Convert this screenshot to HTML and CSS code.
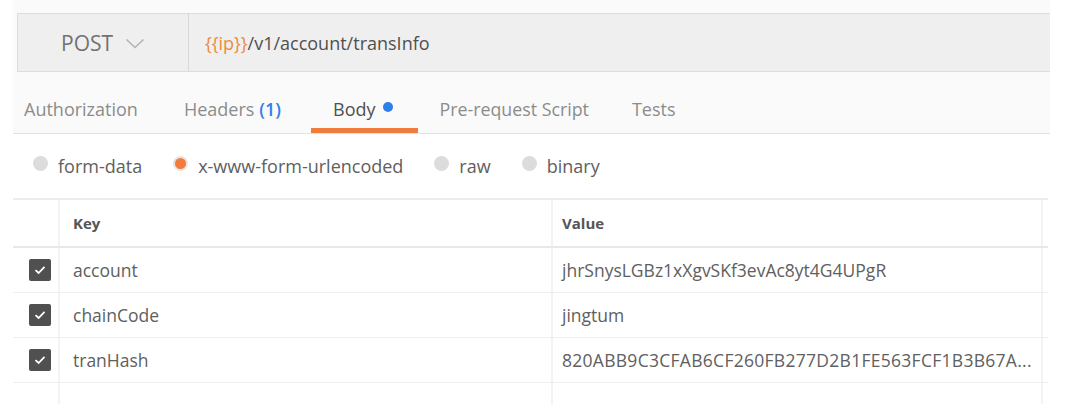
FILE: index.html
```html
<!DOCTYPE html>
<html>
<head>
<meta charset="utf-8">
<link rel="stylesheet" href="styles.css">
</head>
<body>
<div class="panel">
  <div class="top">
    <div class="urlbar">
      <div class="method">
        <span class="method-name">POST</span>
        <svg class="chev" width="20" height="11" viewBox="0 0 20 11"><path d="M1.5 1.5 L10 9.5 L18.5 1.5" fill="none" stroke="#b3b3b3" stroke-width="1.6"/></svg>
      </div>
      <div class="url"><span class="var">{{ip}}</span>/v1/account/transInfo</div>
    </div>
    <div class="tabs">
      <div class="tab">Authorization</div>
      <div class="tab">Headers <span class="count">(1)</span></div>
      <div class="tab active">Body <span class="dot"></span></div>
      <div class="tab">Pre-request Script</div>
      <div class="tab">Tests</div>
    </div>
  </div>
  <div class="radios">
    <label class="radio"><span class="circle"></span>form-data</label>
    <label class="radio"><span class="circle on"></span>x-www-form-urlencoded</label>
    <label class="radio"><span class="circle"></span>raw</label>
    <label class="radio"><span class="circle"></span>binary</label>
  </div>
  <div class="table">
    <div class="row head">
      <div class="c-check"></div>
      <div class="c-key">Key</div>
      <div class="c-val">Value</div>
    </div>
    <div class="row">
      <div class="c-check"><span class="cb"><svg width="12" height="10" viewBox="0 0 12 10"><path d="M1.5 5.2 L4.6 8 L10.5 1.8" fill="none" stroke="#fff" stroke-width="1.8"/></svg></span></div>
      <div class="c-key">account</div>
      <div class="c-val">jhrSnysLGBz1xXgvSKf3evAc8yt4G4UPgR</div>
    </div>
    <div class="row">
      <div class="c-check"><span class="cb"><svg width="12" height="10" viewBox="0 0 12 10"><path d="M1.5 5.2 L4.6 8 L10.5 1.8" fill="none" stroke="#fff" stroke-width="1.8"/></svg></span></div>
      <div class="c-key">chainCode</div>
      <div class="c-val">jingtum</div>
    </div>
    <div class="row">
      <div class="c-check"><span class="cb"><svg width="12" height="10" viewBox="0 0 12 10"><path d="M1.5 5.2 L4.6 8 L10.5 1.8" fill="none" stroke="#fff" stroke-width="1.8"/></svg></span></div>
      <div class="c-key">tranHash</div>
      <div class="c-val hash">820ABB9C3CFAB6CF260FB277D2B1FE563FCF1B3B67A...</div>
    </div>
    <div class="row last">
      <div class="c-check"></div>
      <div class="c-key"></div>
      <div class="c-val"></div>
    </div>
  </div>
</div>
</body>
</html>
```
FILE: styles.css
```css
html, body {
  margin: 0;
  padding: 0;
  background: #ffffff;
  font-family: "Open Sans", "Liberation Sans", sans-serif;
}
.panel {
  margin-left: 13px;
  width: 1037px;
}
.top {
  background: #fafafa;
  padding-top: 13px;
}
.urlbar {
  margin-left: 4px;
  height: 57px;
  display: flex;
  background: #efefef;
  border: 1px solid #dddddd;
  border-right: none;
}
.method {
  width: 171px;
  border-right: 1px solid #d8d8d8;
  display: flex;
  align-items: center;
  padding-left: 43px;
  box-sizing: border-box;
  gap: 12px;
}
.method-name {
  font-size: 21px;
  color: #727272;
  font-weight: 500;
}
.chev { margin-top: 1px; }
.url {
  display: flex;
  align-items: center;
  padding-left: 16px;
  font-size: 18px;
  color: #505050;
}
.var { color: #f08a3c; }
.tabs {
  height: 62px;
  box-sizing: border-box;
  padding-top: 13px;
  display: flex;
  align-items: stretch;
  border-bottom: 1px solid #e2e2e2;
  padding-left: 11px;
}
.tab {
  display: flex;
  align-items: center;
  font-size: 18px;
  color: #8c8c8c;
  margin-right: 46px;
  position: relative;
  white-space: nowrap;
}
.tab:nth-child(2) { margin-right: 30px; }
.tab:nth-child(3) { margin-right: 22px; }
.tab:nth-child(4) { margin-right: 43px; font-size: 17.8px; }
.tab .count {
  color: #2f80ed;
  font-weight: 600;
  margin-left: 5px;
}
.tab.active {
  color: #505050;
  padding: 0 25px 0 22px;
}
.tab.active::after {
  content: "";
  position: absolute;
  left: 0;
  right: 0;
  bottom: 0;
  height: 5px;
  background: #f07c3e;
}
.dot {
  display: inline-block;
  width: 10px;
  height: 10px;
  border-radius: 50%;
  background: #2f7fe8;
  margin-left: 7px;
  margin-top: -4px;
}
.radios {
  height: 64px;
  display: flex;
  align-items: center;
  padding-left: 20px;
  font-size: 18px;
  color: #606060;
}
.radio {
  display: flex;
  align-items: center;
  margin-right: 31px;
  white-space: nowrap;
}
.circle {
  width: 15px;
  height: 15px;
  border-radius: 50%;
  background: #dcdcdc;
  margin-right: 10px;
  margin-top: -6px;
  box-sizing: border-box;
}
.circle.on {
  background: #f07c3e;
  border: 2px solid #e4e4e4;
}
.table {
  border-top: 2px solid #ececec;
  width: 1035px;
}
.row {
  display: flex;
  height: 45px;
  box-sizing: border-box;
  border-bottom: 1px solid #efefef;
}
.row.head {
  height: 48px;
  border-bottom: 2px solid #e8e8e8;
}
.row.last { border-bottom: none; height: 22px; }
.c-check {
  width: 47px;
  border-right: 2px solid #f3f3f3;
  display: flex;
  align-items: center;
  justify-content: flex-end;
  padding-right: 7px;
  box-sizing: border-box;
}
.c-key {
  width: 493px;
  border-right: 2px solid #f3f3f3;
  display: flex;
  align-items: center;
  padding-left: 13px;
  box-sizing: border-box;
  font-size: 17.5px;
  color: #606060;
}
.c-val {
  width: 490px;
  border-right: 2px solid #f3f3f3;
  display: flex;
  align-items: center;
  padding-left: 9px;
  box-sizing: border-box;
  font-size: 17.5px;
  color: #606060;
  white-space: nowrap;
  overflow: hidden;
}
.c-val.hash { letter-spacing: 0.28px; }
.head .c-key, .head .c-val {
  font-weight: 700;
  font-size: 15px;
  color: #555555;
}
.cb {
  width: 22px;
  height: 22px;
  border-radius: 2px;
  background: #505050;
  display: flex;
  align-items: center;
  justify-content: center;
}
```
